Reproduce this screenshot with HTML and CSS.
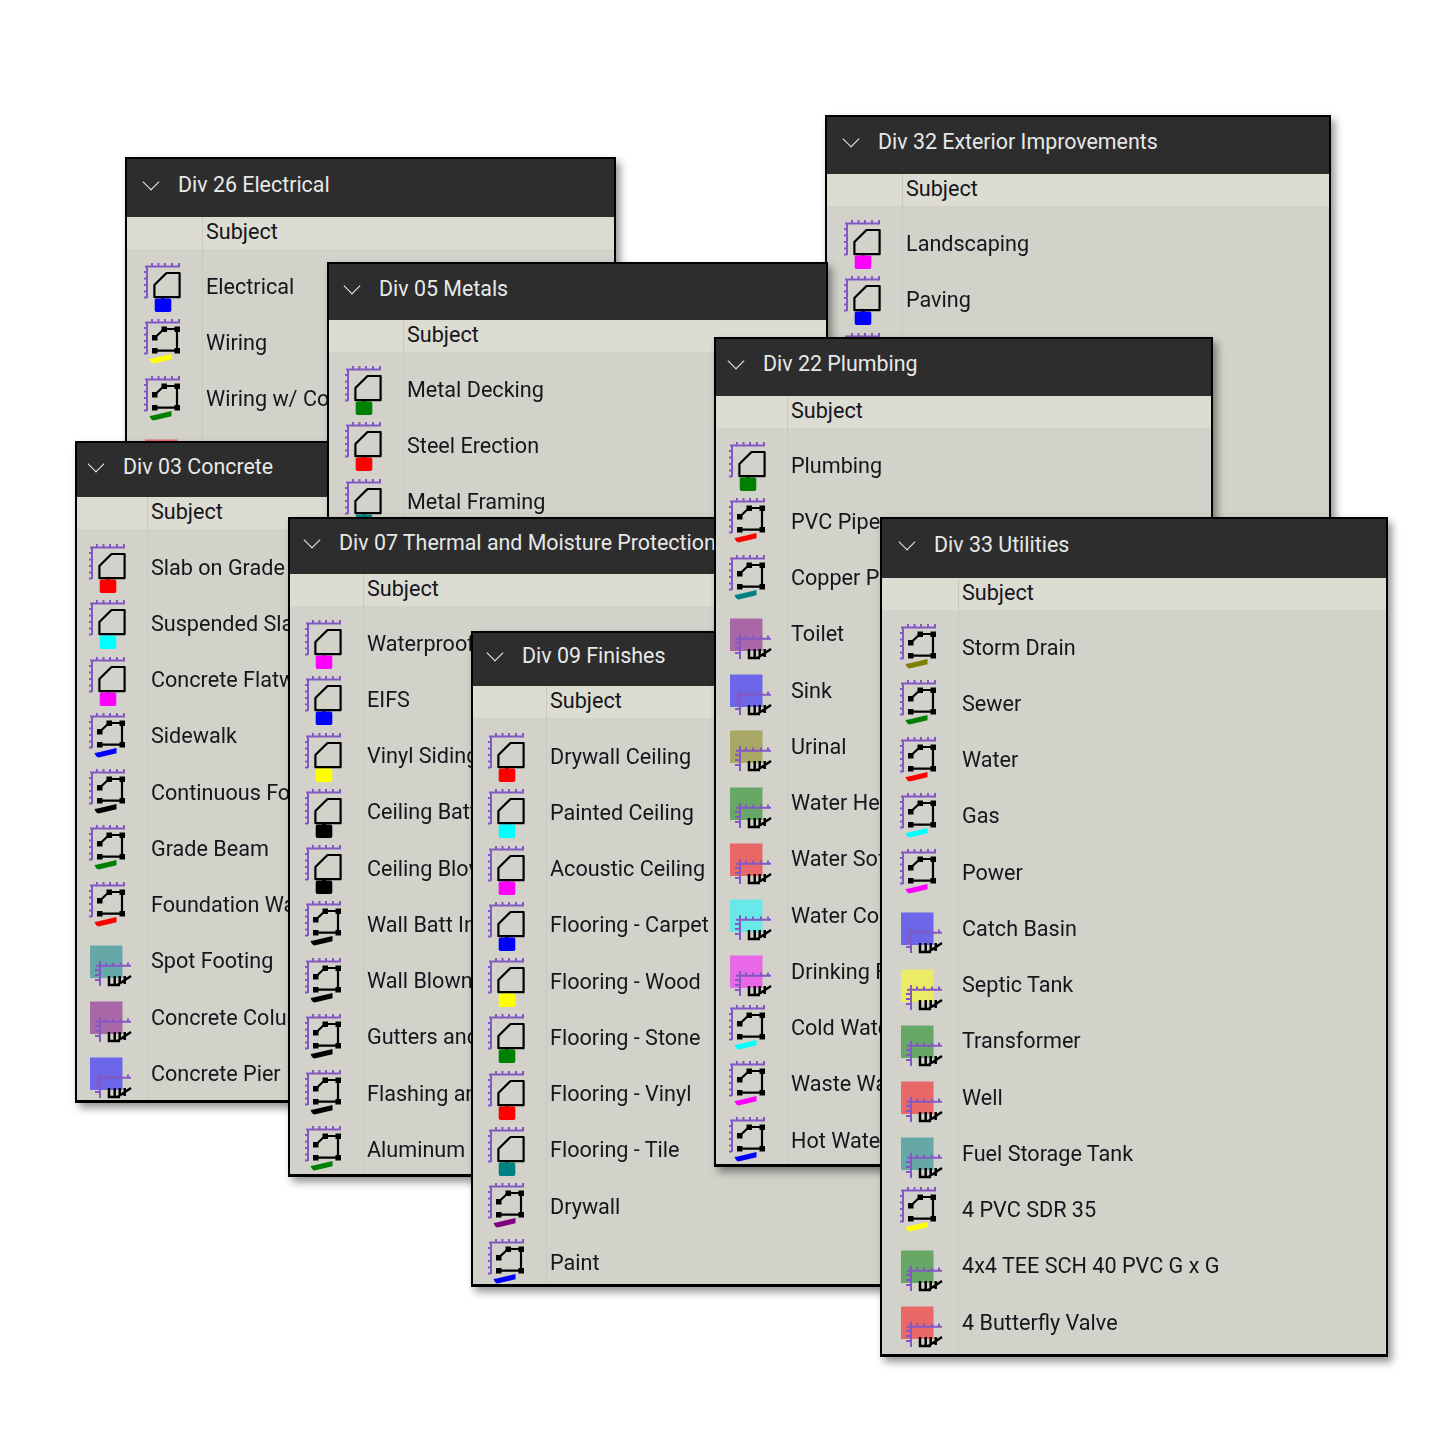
FILE: index.html

```html
<!DOCTYPE html>
<html lang="en">
<head>
    <meta charset="UTF-8">
    <title>Takeoff Groups</title>
    <link rel="stylesheet" href="styles.css">
</head>
<body>
    <svg class="sprites" width="0" height="0" aria-hidden="true">
        <symbol id="ruler-top" viewBox="0 0 44 50" overflow="visible">
            <path class="ruler" d="M2 4.5H37M9 1V4.5M15.5 1V4.5M22 1V4.5M29 1V4.5M36 1V4.5M4 3.5V36M1 10H4M1 16.5H4M1 23H4M1 29.5H4M1 35.5H4"/>
        </symbol>
        <symbol id="area" viewBox="0 0 44 50" overflow="visible">
            <use href="#ruler-top"/>
            <path class="swatch" d="M13.5 36.5H18L20 33.5L22 36.5H26.5Q28.3 36.5 28.3 38.3V48.2Q28.3 50 26.5 50H13.5Q11.7 50 11.7 48.2V38.3Q11.7 36.5 13.5 36.5Z"/>
            <path class="outline" d="M36.6 11V35.2H11.4V23L23.5 11Z"/>
        </symbol>
        <symbol id="linear" viewBox="0 0 44 50" overflow="visible">
            <use href="#ruler-top"/>
            <path class="swatch" d="M6.5 41L9.5 40.5L28.5 36V41.2L10.5 45.5Q8 45 6.5 41Z"/>
            <path class="outline" d="M11.7 19.7L21 11H34V32.7H11.7"/>
            <path class="nodes" d="M9 17h5.5v5.5h-5.5zM18.5 8.5h5.5v5.5h-5.5zM31.5 8.5h5.5v5.5h-5.5zM31.5 30h5.5v5.5h-5.5zM9 30h5.5v5.5h-5.5z"/>
        </symbol>
        <symbol id="count" viewBox="0 0 44 50" overflow="visible">
            <rect class="swatch" x="2" y="8.5" width="32.5" height="32.5"/>
            <path class="ruler" d="M8 28.7H43M12 24V49M18 25.5V28.7M25 25.5V28.7M33 25.5V28.7M40 25.5V28.7M7 33H12M7 38H12M7 43H12"/>
            <path class="tally" d="M21 39V48H32M26.7 39V48M31.7 39V48M36.7 39V47M30 47.5L43 39"/>
        </symbol>
    </svg>

    <section class="panel div-26">
        <header class="panel-head"><span class="chevron"></span><h2>Div 26 Electrical</h2></header>
        <div class="subject">Subject</div>
        <ul class="rows">
            <li class="row"><span class="cell"><svg class="icon blue"><use href="#area"/></svg></span>Electrical</li>
            <li class="row"><span class="cell"><svg class="icon yellow"><use href="#linear"/></svg></span>Wiring</li>
            <li class="row"><span class="cell"><svg class="icon green"><use href="#linear"/></svg></span>Wiring w/ Conduit</li>
            <li class="row"><span class="cell"><svg class="icon soft-red"><use href="#count"/></svg></span>Lighting</li>
        </ul>
    </section>

    <section class="panel div-32">
        <header class="panel-head"><span class="chevron"></span><h2>Div 32 Exterior Improvements</h2></header>
        <div class="subject">Subject</div>
        <ul class="rows">
            <li class="row"><span class="cell"><svg class="icon magenta"><use href="#area"/></svg></span>Landscaping</li>
            <li class="row"><span class="cell"><svg class="icon blue"><use href="#area"/></svg></span>Paving</li>
            <li class="row"><span class="cell"><svg class="icon red"><use href="#area"/></svg></span>Curbs</li>
        </ul>
    </section>

    <section class="panel div-03">
        <header class="panel-head"><span class="chevron"></span><h2>Div 03 Concrete</h2></header>
        <div class="subject">Subject</div>
        <ul class="rows">
            <li class="row"><span class="cell"><svg class="icon red"><use href="#area"/></svg></span>Slab on Grade</li>
            <li class="row"><span class="cell"><svg class="icon cyan"><use href="#area"/></svg></span>Suspended Slab</li>
            <li class="row"><span class="cell"><svg class="icon magenta"><use href="#area"/></svg></span>Concrete Flatwork</li>
            <li class="row"><span class="cell"><svg class="icon blue"><use href="#linear"/></svg></span>Sidewalk</li>
            <li class="row"><span class="cell"><svg class="icon black"><use href="#linear"/></svg></span>Continuous Footing</li>
            <li class="row"><span class="cell"><svg class="icon green"><use href="#linear"/></svg></span>Grade Beam</li>
            <li class="row"><span class="cell"><svg class="icon red"><use href="#linear"/></svg></span>Foundation Wall</li>
            <li class="row"><span class="cell"><svg class="icon soft-teal"><use href="#count"/></svg></span>Spot Footing</li>
            <li class="row"><span class="cell"><svg class="icon soft-purple"><use href="#count"/></svg></span>Concrete Column</li>
            <li class="row"><span class="cell"><svg class="icon soft-blue"><use href="#count"/></svg></span>Concrete Pier</li>
        </ul>
    </section>

    <section class="panel div-05">
        <header class="panel-head"><span class="chevron"></span><h2>Div 05 Metals</h2></header>
        <div class="subject">Subject</div>
        <ul class="rows">
            <li class="row"><span class="cell"><svg class="icon green"><use href="#area"/></svg></span>Metal Decking</li>
            <li class="row"><span class="cell"><svg class="icon red"><use href="#area"/></svg></span>Steel Erection</li>
            <li class="row"><span class="cell"><svg class="icon teal"><use href="#area"/></svg></span>Metal Framing</li>
        </ul>
    </section>

    <section class="panel div-07">
        <header class="panel-head"><span class="chevron"></span><h2>Div 07 Thermal and Moisture Protection</h2></header>
        <div class="subject">Subject</div>
        <ul class="rows">
            <li class="row"><span class="cell"><svg class="icon magenta"><use href="#area"/></svg></span>Waterproofing</li>
            <li class="row"><span class="cell"><svg class="icon blue"><use href="#area"/></svg></span>EIFS</li>
            <li class="row"><span class="cell"><svg class="icon yellow"><use href="#area"/></svg></span>Vinyl Siding</li>
            <li class="row"><span class="cell"><svg class="icon black"><use href="#area"/></svg></span>Ceiling Batt</li>
            <li class="row"><span class="cell"><svg class="icon black"><use href="#area"/></svg></span>Ceiling Blown</li>
            <li class="row"><span class="cell"><svg class="icon black"><use href="#linear"/></svg></span>Wall Batt Insulation</li>
            <li class="row"><span class="cell"><svg class="icon black"><use href="#linear"/></svg></span>Wall Blown</li>
            <li class="row"><span class="cell"><svg class="icon black"><use href="#linear"/></svg></span>Gutters and Downspouts</li>
            <li class="row"><span class="cell"><svg class="icon black"><use href="#linear"/></svg></span>Flashing and Trim</li>
            <li class="row"><span class="cell"><svg class="icon green"><use href="#linear"/></svg></span>Aluminum</li>
        </ul>
    </section>

    <section class="panel div-09">
        <header class="panel-head"><span class="chevron"></span><h2>Div 09 Finishes</h2></header>
        <div class="subject">Subject</div>
        <ul class="rows">
            <li class="row"><span class="cell"><svg class="icon red"><use href="#area"/></svg></span>Drywall Ceiling</li>
            <li class="row"><span class="cell"><svg class="icon cyan"><use href="#area"/></svg></span>Painted Ceiling</li>
            <li class="row"><span class="cell"><svg class="icon magenta"><use href="#area"/></svg></span>Acoustic Ceiling</li>
            <li class="row"><span class="cell"><svg class="icon blue"><use href="#area"/></svg></span>Flooring - Carpet</li>
            <li class="row"><span class="cell"><svg class="icon yellow"><use href="#area"/></svg></span>Flooring - Wood</li>
            <li class="row"><span class="cell"><svg class="icon green"><use href="#area"/></svg></span>Flooring - Stone</li>
            <li class="row"><span class="cell"><svg class="icon red"><use href="#area"/></svg></span>Flooring - Vinyl</li>
            <li class="row"><span class="cell"><svg class="icon teal"><use href="#area"/></svg></span>Flooring - Tile</li>
            <li class="row"><span class="cell"><svg class="icon purple"><use href="#linear"/></svg></span>Drywall</li>
            <li class="row"><span class="cell"><svg class="icon blue"><use href="#linear"/></svg></span>Paint</li>
        </ul>
    </section>

    <section class="panel div-22">
        <header class="panel-head"><span class="chevron"></span><h2>Div 22 Plumbing</h2></header>
        <div class="subject">Subject</div>
        <ul class="rows">
            <li class="row"><span class="cell"><svg class="icon green"><use href="#area"/></svg></span>Plumbing</li>
            <li class="row"><span class="cell"><svg class="icon red"><use href="#linear"/></svg></span>PVC Pipe</li>
            <li class="row"><span class="cell"><svg class="icon teal"><use href="#linear"/></svg></span>Copper Pipe</li>
            <li class="row"><span class="cell"><svg class="icon soft-purple"><use href="#count"/></svg></span>Toilet</li>
            <li class="row"><span class="cell"><svg class="icon soft-blue"><use href="#count"/></svg></span>Sink</li>
            <li class="row"><span class="cell"><svg class="icon soft-olive"><use href="#count"/></svg></span>Urinal</li>
            <li class="row"><span class="cell"><svg class="icon soft-green"><use href="#count"/></svg></span>Water Heater</li>
            <li class="row"><span class="cell"><svg class="icon soft-red"><use href="#count"/></svg></span>Water Softener</li>
            <li class="row"><span class="cell"><svg class="icon soft-cyan"><use href="#count"/></svg></span>Water Cooler</li>
            <li class="row"><span class="cell"><svg class="icon soft-magenta"><use href="#count"/></svg></span>Drinking Fountain</li>
            <li class="row"><span class="cell"><svg class="icon cyan"><use href="#linear"/></svg></span>Cold Water</li>
            <li class="row"><span class="cell"><svg class="icon magenta"><use href="#linear"/></svg></span>Waste Water</li>
            <li class="row"><span class="cell"><svg class="icon blue"><use href="#linear"/></svg></span>Hot Water</li>
        </ul>
    </section>

    <section class="panel div-33">
        <header class="panel-head"><span class="chevron"></span><h2>Div 33 Utilities</h2></header>
        <div class="subject">Subject</div>
        <ul class="rows">
            <li class="row"><span class="cell"><svg class="icon olive"><use href="#linear"/></svg></span>Storm Drain</li>
            <li class="row"><span class="cell"><svg class="icon green"><use href="#linear"/></svg></span>Sewer</li>
            <li class="row"><span class="cell"><svg class="icon red"><use href="#linear"/></svg></span>Water</li>
            <li class="row"><span class="cell"><svg class="icon cyan"><use href="#linear"/></svg></span>Gas</li>
            <li class="row"><span class="cell"><svg class="icon magenta"><use href="#linear"/></svg></span>Power</li>
            <li class="row"><span class="cell"><svg class="icon soft-blue"><use href="#count"/></svg></span>Catch Basin</li>
            <li class="row"><span class="cell"><svg class="icon soft-yellow"><use href="#count"/></svg></span>Septic Tank</li>
            <li class="row"><span class="cell"><svg class="icon soft-green"><use href="#count"/></svg></span>Transformer</li>
            <li class="row"><span class="cell"><svg class="icon soft-red"><use href="#count"/></svg></span>Well</li>
            <li class="row"><span class="cell"><svg class="icon soft-teal"><use href="#count"/></svg></span>Fuel Storage Tank</li>
            <li class="row"><span class="cell"><svg class="icon yellow"><use href="#linear"/></svg></span>4 PVC SDR 35</li>
            <li class="row"><span class="cell"><svg class="icon soft-green"><use href="#count"/></svg></span>4x4 TEE SCH 40 PVC G x G</li>
            <li class="row"><span class="cell"><svg class="icon soft-red"><use href="#count"/></svg></span>4 Butterfly Valve</li>
        </ul>
    </section>
</body>
</html>
```

FILE: styles.css

```css
html, body {
    margin: 0;
    height: 1444px;
    background: #ffffff;
    overflow: hidden;
}
body {
    position: relative;
    font-family: Roboto, 'Liberation Sans', sans-serif;
    font-size: 21.6px;
    color: #15151c;
}
.sprites {
    position: absolute;
}

/* panels are loose windows on a canvas, each one a bit different after pasting */
.panel {
    position: absolute;
    box-sizing: border-box;
    border: 2px solid #000;
    border-bottom-width: 3px;
    background: #d2d2ca;
    overflow: hidden;
    box-shadow: 4px 5px 8px rgba(0, 0, 0, 0.42);
    filter: blur(0.45px);
    --pad: 9px;
}
.div-26 { left: 125px; top: 157px; width: 491px; height: 600px; --head: 58px; --col: 75px; }
.div-32 { left: 825px; top: 115px; width: 506px; height: 700px; --head: 57px; --col: 75px; }
.div-03 { left: 75px; top: 441px; width: 490px; height: 662px; --head: 54px; --col: 70px; --pad: 10px; }
.div-05 { left: 327px; top: 262px; width: 501px; height: 640px; --head: 56px; --col: 74px; }
.div-07 { left: 288px; top: 517px; width: 490px; height: 660px; --head: 55px; --col: 73px; }
.div-09 { left: 471px; top: 631px; width: 490px; height: 656px; --head: 53px; --col: 73px; --pad: 10px; }
.div-22 { left: 714px; top: 337px; width: 499px; height: 830px; --head: 57px; --col: 71px; }
.div-33 { left: 880px; top: 517px; width: 508px; height: 840px; --head: 59px; --col: 76px; }

.panel-head {
    display: flex;
    align-items: center;
    box-sizing: border-box;
    height: var(--head);
    padding-left: calc(var(--col) - 59px);
    padding-bottom: 8px;
    background: #2d2d2d;
    color: #e8e8e8;
}
.panel-head h2 {
    margin: 0 0 0 19px;
    font-size: 21.4px;
    font-weight: 400;
    white-space: nowrap;
}
.chevron {
    box-sizing: border-box;
    width: 12px;
    height: 12px;
    margin: -5px 2px 0 2px;
    border-right: 1.5px solid #ececec;
    border-bottom: 1.5px solid #ececec;
    transform: rotate(45deg);
}
.subject {
    height: 32px;
    line-height: 30px;
    padding-left: calc(var(--col) + 4px);
    background: linear-gradient(#c9c9c0, #c9c9c0) no-repeat var(--col) 0 / 1px 100%, #dcdcd3;
}
.rows {
    list-style: none;
    margin: 0;
    padding: var(--pad) 0 0;
    height: 100%;
    background: linear-gradient(#c8c8c0, #c8c8c0) no-repeat var(--col) 0 / 1px 100%;
}
.row {
    display: flex;
    align-items: center;
    height: 56.25px;
    white-space: nowrap;
}
.cell {
    display: flex;
    justify-content: flex-end;
    box-sizing: border-box;
    width: calc(var(--col) + 4px);
    padding-right: 19px;
    flex: none;
}
.icon {
    width: 44px;
    height: 50px;
    margin-top: 2px;
    overflow: visible;
}

/* icon parts, the colour comes from the class on the svg */
.ruler {
    fill: none;
    stroke: #8458c4;
    stroke-width: 2;
}
.outline {
    fill: none;
    stroke: #000;
    stroke-width: 2.2;
    stroke-linejoin: round;
}
.nodes {
    fill: #000;
}
.tally {
    fill: none;
    stroke: #000;
    stroke-width: 2.5;
}
.swatch {
    fill: currentColor;
}

.blue { color: #0000ff; }
.yellow { color: #ffff00; }
.green { color: #008000; }
.red { color: #ff0000; }
.magenta { color: #ff00ff; }
.cyan { color: #00ffff; }
.teal { color: #008080; }
.black { color: #000000; }
.purple { color: #800080; }
.olive { color: #808000; }
.soft-blue { color: #6b67e8; }
.soft-yellow { color: #ebeb66; }
.soft-green { color: #67a867; }
.soft-red { color: #e86868; }
.soft-teal { color: #66a8a8; }
.soft-purple { color: #a868a8; }
.soft-olive { color: #a8a866; }
.soft-cyan { color: #68e8e8; }
.soft-magenta { color: #e868e8; }
```
